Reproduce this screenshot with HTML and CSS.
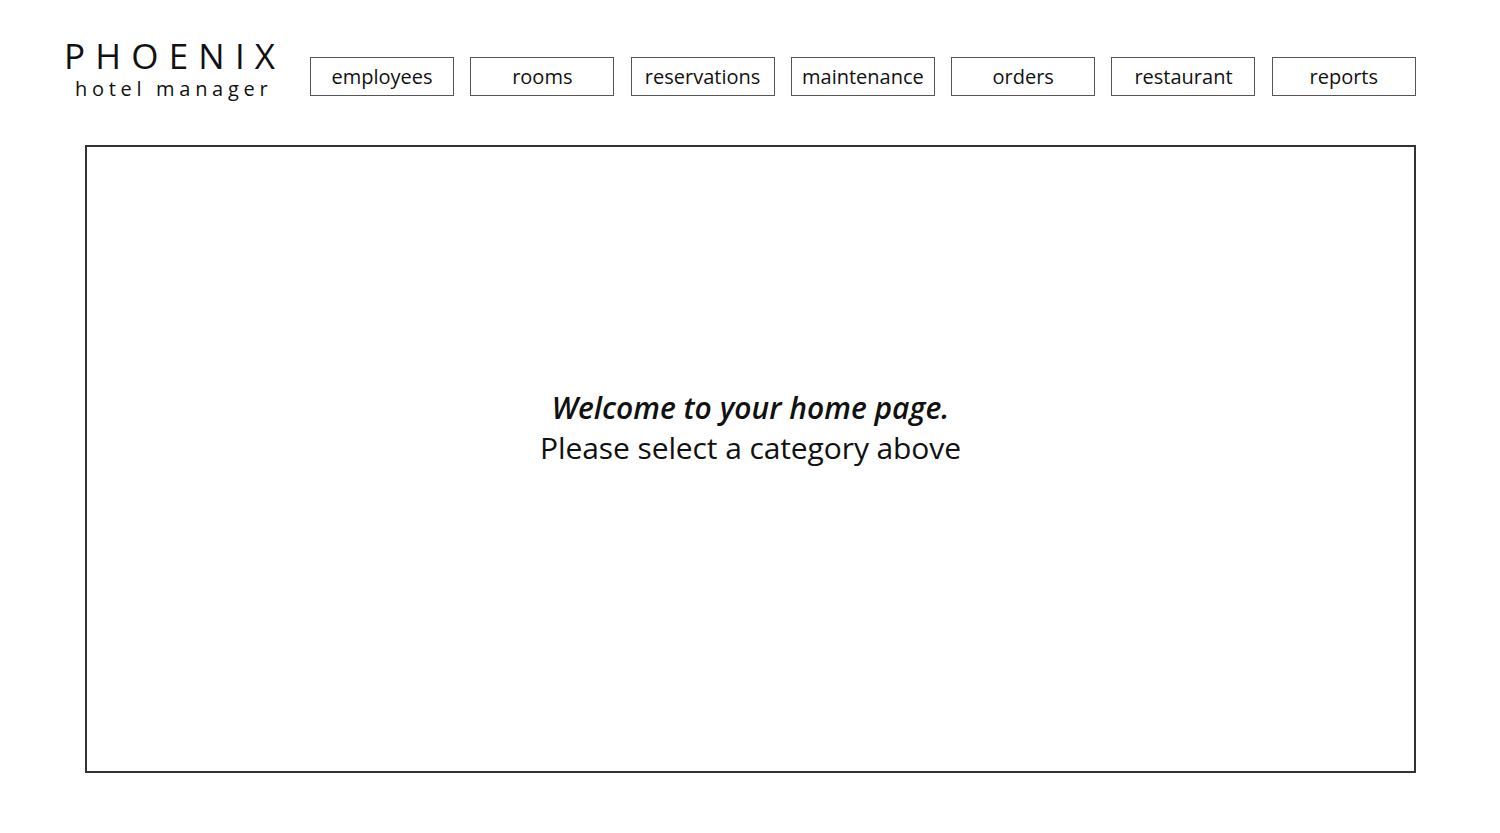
FILE: index.html
```html
<!DOCTYPE html>
<html lang="en">
<head>
<meta charset="utf-8">
<title>Phoenix Hotel Manager</title>
<link rel="stylesheet" href="styles.css">
</head>
<body>
<header class="header">
  <div class="logo">
    <div class="logo-title">PHOENIX</div>
    <div class="logo-sub">hotel manager</div>
  </div>
  <nav class="nav">
    <a class="nav-btn" href="#">employees</a>
    <a class="nav-btn" href="#">rooms</a>
    <a class="nav-btn" href="#">reservations</a>
    <a class="nav-btn" href="#">maintenance</a>
    <a class="nav-btn" href="#">orders</a>
    <a class="nav-btn" href="#">restaurant</a>
    <a class="nav-btn" href="#">reports</a>
  </nav>
</header>
<main class="content">
  <div class="welcome">
    <div class="welcome-title">Welcome to your home page.</div>
    <div class="welcome-sub">Please select a category above</div>
  </div>
</main>
</body>
</html>
```
FILE: styles.css
```css
* { box-sizing: border-box; }
html, body { margin: 0; padding: 0; background: #fff; }
body {
  font-family: "Open Sans", "Noto Sans", sans-serif;
  color: #111;
  width: 1500px;
  height: 833px;
  overflow: hidden;
}
.header {
  display: flex;
  align-items: flex-start;
  padding: 40px 0 0 64px;
  height: 145px;
}
.logo {
  width: 246px;
  display: flex;
  flex-direction: column;
}
.logo-title {
  font-size: 35px;
  line-height: 32px;
  letter-spacing: 10.2px;
  font-weight: 400;
}
.logo-sub {
  font-size: 20px;
  line-height: 22px;
  letter-spacing: 4.7px;
  padding-left: 11px;
  margin-top: 6px;
}
.nav {
  display: flex;
  gap: 16.3px;
  margin-top: 17px;
}
.nav-btn {
  width: 144px;
  height: 39px;
  border: 1px solid #555;
  display: flex;
  align-items: center;
  justify-content: center;
  font-size: 20px;
  color: #111;
  text-decoration: none;
  letter-spacing: 0;
}
.content {
  margin-left: 85px;
  width: 1331px;
  height: 628px;
  border: 2px solid #333;
  display: flex;
  align-items: center;
  justify-content: center;
}
.welcome {
  text-align: center;
  margin-top: -62px;
}
.welcome-title {
  font-size: 30px;
  font-weight: 600;
  font-style: italic;
  line-height: 40px;
  letter-spacing: 0;
}
.welcome-sub {
  font-size: 30px;
  line-height: 40px;
  letter-spacing: -0.1px;
}
```
